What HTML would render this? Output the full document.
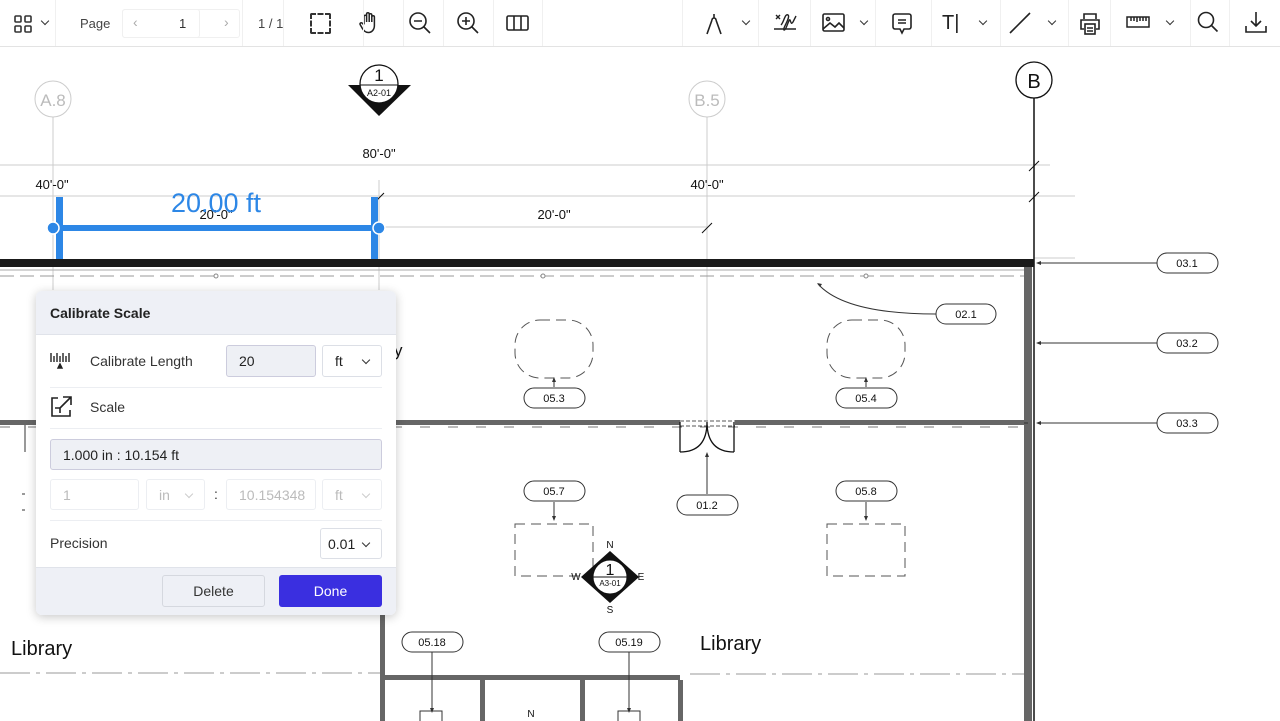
<!DOCTYPE html>
<html><head><meta charset="utf-8"><style>
*{box-sizing:border-box;margin:0;padding:0}
body{width:1280px;height:721px;overflow:hidden;background:#fff;font-family:"Liberation Sans",sans-serif;position:relative;color:#222}
.tb{position:absolute;left:0;top:0;width:1280px;height:47px;background:#fff;border-bottom:1px solid #e3e3e3;z-index:3}
.sep{position:absolute;top:0;width:1px;height:46px;background:#f0f0f0}
.ic{position:absolute;top:11px}
.chev{position:absolute;top:18px;width:6px;height:6px;border-right:1.5px solid #333;border-bottom:1.5px solid #333;transform:rotate(45deg)}
.panel{position:absolute;left:36px;top:291px;width:360px;height:324px;background:#fff;border-radius:6px;box-shadow:0 2px 10px rgba(0,0,0,.22);z-index:4;overflow:hidden;font-size:14px}
.hd{height:44px;background:#eef0f6;border-bottom:1px solid #e0e3ea;padding:14px 14px;font-weight:bold;font-size:14px;color:#222}
.box{position:absolute;border:1px solid #dcdfe6;border-radius:3px;background:#fff;font-size:14px;padding:0 12px;display:flex;align-items:center}
.sel::after{content:"";position:absolute;right:12px;top:11px;width:5px;height:5px;border-right:1.5px solid #333;border-bottom:1.5px solid #333;transform:rotate(45deg)}
.dis{color:#bbb;border-color:#eceef2}
.dis.sel::after{border-color:#ccc}
.hr{position:absolute;left:14px;right:14px;height:1px;background:#eceef2}
.btn{position:absolute;top:284px;height:32px;border-radius:3px;display:flex;align-items:center;justify-content:center;font-size:14px}
</style></head><body>
<div class="tb">
 <svg class="ic" style="left:14px;top:15px" width="18" height="18" viewBox="0 0 18 18" fill="none" stroke="#333" stroke-width="1.6"><rect x="1" y="1" width="6" height="6" rx="1"/><rect x="11" y="1" width="6" height="6" rx="1"/><rect x="1" y="11" width="6" height="6" rx="1"/><rect x="11" y="11" width="6" height="6" rx="1"/></svg>
 <div class="chev" style="left:42px"></div>
 <div class="sep" style="left:55px"></div>
 <div style="position:absolute;left:80px;top:16px;font-size:13px;color:#444">Page</div>
 <div style="position:absolute;left:122px;top:9px;width:78px;height:29px;border:1px solid #f0f0f0;border-radius:3px"></div>
 <div style="position:absolute;left:122px;top:9px;width:118px;height:29px;border:1px solid #f0f0f0;border-radius:3px"></div>
 <div style="position:absolute;left:133px;top:14px;font-size:14px;color:#aaa">‹</div>
 <div style="position:absolute;left:179px;top:16px;font-size:13px;color:#333">1</div>
 <div style="position:absolute;left:224px;top:14px;font-size:14px;color:#aaa">›</div>
 <div style="position:absolute;left:258px;top:16px;font-size:13px;color:#444">1 / 1</div>
 <div class="sep" style="left:242px"></div><div class="sep" style="left:283px"></div>
 <div style="position:absolute;left:310px;top:13px;width:21px;height:21px;border:2px dashed #333;border-radius:2px"></div>
 <div class="sep" style="left:322px;display:none"></div>
 <svg class="ic" style="left:358px" width="22" height="24" viewBox="0 0 22 24" fill="none" stroke="#222" stroke-width="1.5" stroke-linejoin="round"><path d="M6 13V5.5a1.3 1.3 0 0 1 2.6 0V11M8.6 10V3a1.3 1.3 0 0 1 2.6 0v8M11.2 10V4a1.3 1.3 0 0 1 2.6 0v7M13.8 10.5V6a1.3 1.3 0 0 1 2.6 0v8.5c0 4-2.5 7-6 7-3 0-4.5-1.5-6-4l-2.3-4a1.3 1.3 0 0 1 2.2-1.3L6 14"/></svg>
 <svg class="ic" style="left:408px" width="24" height="24" viewBox="0 0 24 24" fill="none" stroke="#222" stroke-width="1.6"><circle cx="10" cy="10" r="8"/><path d="M16 16l6 6M6 10h8"/></svg>
 <svg class="ic" style="left:456px" width="24" height="24" viewBox="0 0 24 24" fill="none" stroke="#222" stroke-width="1.6"><circle cx="10" cy="10" r="8"/><path d="M16 16l6 6M6 10h8M10 6v8"/></svg>
 <svg class="ic" style="left:506px;top:15px" width="23" height="16" viewBox="0 0 23 16" fill="none" stroke="#222" stroke-width="1.6"><rect x="1" y="1" width="21" height="14" rx="1.5"/><path d="M8 1v14M15 1v14"/></svg>
 <div class="sep" style="left:363px"></div><div class="sep" style="left:403px"></div><div class="sep" style="left:443px"></div><div class="sep" style="left:493px"></div><div class="sep" style="left:542px"></div>
 <div class="sep" style="left:682px"></div><div class="sep" style="left:758px"></div><div class="sep" style="left:810px"></div><div class="sep" style="left:875px"></div><div class="sep" style="left:931px"></div><div class="sep" style="left:1000px"></div><div class="sep" style="left:1068px"></div><div class="sep" style="left:1110px"></div><div class="sep" style="left:1190px"></div><div class="sep" style="left:1229px"></div>
 <svg class="ic" style="left:704px" width="20" height="24" viewBox="0 0 20 24" fill="none" stroke="#222" stroke-width="1.6"><path d="M3 23L8 9M17 23L12 9M8 9a2 2 0 0 1 4 0M10 7V3"/></svg>
 <div class="chev" style="left:743px"></div>
 <svg class="ic" style="left:772px" width="26" height="24" viewBox="0 0 26 24" fill="none" stroke="#222" stroke-width="1.4"><path d="M2 18h22M4 4l4 4M8 4l-4 4M9 14c3-3 4-12 7-10s-6 14-4 15 5-12 6-10 1 5 3 2l3-6"/></svg>
 <svg class="ic" style="left:822px;top:13px" width="23" height="19" viewBox="0 0 23 19" fill="none" stroke="#222" stroke-width="1.6"><rect x="1" y="1" width="21" height="17" rx="1.5"/><circle cx="6" cy="6" r="1.5"/><path d="M1 16l7-6 5 4 4-4 5 5"/></svg>
 <div class="chev" style="left:861px"></div>
 <svg class="ic" style="left:892px;top:13px" width="20" height="22" viewBox="0 0 20 22" fill="none" stroke="#222" stroke-width="1.6"><path d="M3 1h14a2 2 0 0 1 2 2v11a2 2 0 0 1-2 2h-5l-2 4-2-4H3a2 2 0 0 1-2-2V3a2 2 0 0 1 2-2zM6 7h8M6 10h8"/></svg>
 <div style="position:absolute;left:942px;top:12px;font-size:20px;color:#222">T|</div>
 <div class="chev" style="left:980px"></div>
 <svg class="ic" style="left:1009px;top:12px" width="22" height="22"><path d="M1 21L21 1" stroke="#222" stroke-width="1.6"/></svg>
 <div class="chev" style="left:1049px"></div>
 <svg class="ic" style="left:1078px;top:12px" width="24" height="24" viewBox="0 0 24 24" fill="none" stroke="#222" stroke-width="1.6"><path d="M6 7V2h12v5M6 17H3V8h18v9h-3"/><rect x="7" y="12" width="10" height="10"/><path d="M9 16h6M9 19h6"/></svg>
 <svg class="ic" style="left:1126px;top:16px" width="24" height="12" viewBox="0 0 24 12" fill="none" stroke="#222" stroke-width="1.5"><rect x="1" y="1" width="22" height="10"/><path d="M5 1v4M8 1v4M11 1v5M14 1v4M17 1v4M20 1v4"/></svg>
 <div class="chev" style="left:1167px"></div>
 <svg class="ic" style="left:1197px" width="22" height="22" viewBox="0 0 22 22" fill="none" stroke="#222" stroke-width="1.6"><circle cx="9" cy="9" r="7.5"/><path d="M14.5 14.5l6 6"/></svg>
 <svg class="ic" style="left:1245px" width="22" height="22" viewBox="0 0 22 22" fill="none" stroke="#222" stroke-width="1.6"><path d="M11 1v14M6 10l5 5 5-5M1 15v6h20v-6"/></svg>
</div>

<svg style="position:absolute;left:0;top:0" width="1280" height="721" font-family="Liberation Sans, sans-serif">
 <g stroke="#ccc" stroke-width="1">
  <line x1="0" y1="165" x2="1050" y2="165"/><line x1="0" y1="196" x2="1075" y2="196"/><line x1="380" y1="227" x2="707" y2="227"/>
  <line x1="53" y1="117" x2="53" y2="290"/><line x1="379" y1="180" x2="379" y2="290"/><line x1="707" y1="117" x2="707" y2="420"/>
  <line x1="1034" y1="258" x2="1075" y2="258"/>
 </g>
 <circle cx="53" cy="99" r="18" fill="#fff" stroke="#ccc"/><text x="53" y="106" font-size="17" fill="#bbb" text-anchor="middle">A.8</text>
 <circle cx="707" cy="99" r="18" fill="#fff" stroke="#ccc"/><text x="707" y="106" font-size="17" fill="#bbb" text-anchor="middle">B.5</text>
 <line x1="1034" y1="98" x2="1034" y2="721" stroke="#111" stroke-width="1.5"/>
 <circle cx="1034" cy="80" r="18" fill="#fff" stroke="#111" stroke-width="1.3"/><text x="1034" y="88" font-size="20" fill="#111" text-anchor="middle">B</text>
 <path d="M1029 171l10-10M1029 202l10-10M702 233l10-10M376 201l8-8" stroke="#111"/>
 <!-- section marker -->
 <polygon points="348,85 411,85 379,116" fill="#111"/>
 <circle cx="379" cy="84" r="19" fill="#fff" stroke="#111" stroke-width="1.3"/>
 <line x1="360" y1="85" x2="398" y2="85" stroke="#111"/>
 <text x="379" y="81" font-size="17" text-anchor="middle" fill="#111">1</text><text x="379" y="96" font-size="9" text-anchor="middle" fill="#111">A2-01</text>
 <g font-size="13" fill="#111" text-anchor="middle">
  <text x="379" y="158">80'-0"</text><text x="52" y="189">40'-0"</text><text x="707" y="189">40'-0"</text><text x="216" y="219">20'-0"</text><text x="554" y="219">20'-0"</text>
 </g>
 <!-- walls -->
 <rect x="0" y="259" width="1034" height="8" fill="#1a1a1a"/>
 <line x1="0" y1="270" x2="1024" y2="270" stroke="#aaa"/>
 <line x1="0" y1="276" x2="1024" y2="276" stroke="#999" stroke-dasharray="14 6"/>
 <circle cx="216" cy="276" r="2" fill="#fff" stroke="#888"/><circle cx="543" cy="276" r="2" fill="#fff" stroke="#888"/><circle cx="866" cy="276" r="2" fill="#fff" stroke="#888"/>
 <rect x="1024" y="267" width="8" height="454" fill="#666"/>
 <rect x="0" y="420" width="680" height="5" fill="#666"/><rect x="735" y="420" width="290" height="5" fill="#666"/>
 <line x1="0" y1="427" x2="1024" y2="427" stroke="#777" stroke-dasharray="10 18"/>
 <path d="M680 421h55M680 426h55" stroke="#555" stroke-dasharray="4 2"/>
 <path d="M680 422v30M734 422v30M680 452c18 0 27-10 27-30c0 20 9 30 27 30" fill="none" stroke="#111" stroke-width="1.3"/>
 <rect x="380" y="420" width="5" height="301" fill="#666"/>
 <rect x="380" y="675" width="300" height="5" fill="#666"/>
 <rect x="480" y="680" width="5" height="41" fill="#666"/><rect x="580" y="680" width="5" height="41" fill="#666"/><rect x="678" y="680" width="5" height="41" fill="#666"/>
 <line x1="0" y1="673" x2="380" y2="673" stroke="#999" stroke-dasharray="30 6 4 6"/>
 <line x1="690" y1="674" x2="1024" y2="674" stroke="#999" stroke-dasharray="30 6 4 6"/>
 <g stroke="#555" fill="none" stroke-dasharray="10 6">
  <rect x="515" y="524" width="78" height="52"/><rect x="827" y="524" width="78" height="52"/>
  <rect x="515" y="320" width="78" height="58" rx="25"/><rect x="827" y="320" width="78" height="58" rx="25"/>
 </g>
 <rect x="420" y="711" width="22" height="12" fill="#fff" stroke="#333"/><rect x="618" y="711" width="22" height="12" fill="#fff" stroke="#333"/>
 <text x="531" y="717" font-size="10" text-anchor="middle" fill="#111">N</text>
 <!-- compass -->
 <polygon points="610,551 639,577 610,603 581,577" fill="#111"/>
 <circle cx="610" cy="577" r="17" fill="#fff" stroke="#111"/>
 <line x1="583" y1="577" x2="637" y2="577" stroke="#111"/>
 <text x="610" y="575" font-size="16" text-anchor="middle" fill="#111">1</text><text x="610" y="586" font-size="8" text-anchor="middle" fill="#111">A3-01</text>
 <g font-size="10" fill="#111" text-anchor="middle"><text x="610" y="548">N</text><text x="610" y="613">S</text><text x="576" y="580">W</text><text x="641" y="580">E</text></g>
 <!-- leaders -->
 <g stroke="#333" fill="none">
  <path d="M554 387v-9M866 387v-9M554 502v18M866 502v18M707 494v-40M432 652v60M629 652v60M1158 263h-120M1158 343h-120M1158 423h-120M1024 423h4"/>
  <path d="M936 314c-60 0-100-10-118-30"/>
 </g>
 <g fill="#333"><path d="M554 377l-2 5h4zM866 377l-2 5h4zM554 521l-2-5h4zM866 521l-2-5h4zM707 452l-2 5h4zM432 713l-2-5h4zM629 713l-2-5h4zM1036 263l5-2v4zM1036 343l5-2v4zM1036 423l5-2v4zM817 283l5 1-2 3z"/></g>
 <g fill="#fff" stroke="#333"><rect x="524" y="388" width="61" height="20" rx="10"/><rect x="836" y="388" width="61" height="20" rx="10"/><rect x="524" y="481" width="61" height="20" rx="10"/><rect x="836" y="481" width="61" height="20" rx="10"/><rect x="677" y="495" width="61" height="20" rx="10"/><rect x="402" y="632" width="61" height="20" rx="10"/><rect x="599" y="632" width="61" height="20" rx="10"/><rect x="936" y="304" width="60" height="20" rx="10"/><rect x="1157" y="253" width="61" height="20" rx="10"/><rect x="1157" y="333" width="61" height="20" rx="10"/><rect x="1157" y="413" width="61" height="20" rx="10"/></g>
 <g font-size="11" fill="#111" text-anchor="middle"><text x="554" y="402">05.3</text><text x="866" y="402">05.4</text><text x="554" y="495">05.7</text><text x="866" y="495">05.8</text><text x="707" y="509">01.2</text><text x="432" y="646">05.18</text><text x="629" y="646">05.19</text><text x="966" y="318">02.1</text><text x="1187" y="267">03.1</text><text x="1187" y="347">03.2</text><text x="1187" y="427">03.3</text></g>
 <text x="11" y="655" font-size="20" fill="#111">Library</text><text x="700" y="650" font-size="20" fill="#111">Library</text>
 <text x="394" y="356" font-size="17" fill="#111">y</text>
 <path d="M25 425v27M22 494h3M22 510h3" stroke="#333" fill="none"/>
 <!-- measurement -->
 <g fill="#2d87e6"><rect x="56" y="197" width="7" height="62"/><rect x="371" y="197" width="7" height="62"/><rect x="56" y="225" width="322" height="6"/><circle cx="53" cy="228" r="6" stroke="#fff" stroke-width="1.5"/><circle cx="379" cy="228" r="6" stroke="#fff" stroke-width="1.5"/></g>
 <text x="216" y="212" font-size="27" fill="#2d87e6" text-anchor="middle">20.00 ft</text>
</svg>

<div class="panel">
 <div class="hd">Calibrate Scale</div>
 <svg style="position:absolute;left:13px;top:60px" width="24" height="18" viewBox="0 0 24 18" fill="none" stroke="#222" stroke-width="1.4"><path d="M2 2v9M5 5v6M8 2v9M11 5v6M14 2v9M17 5v6M20 2v9"/><path d="M9 17l2-4 2 4z" fill="#222"/></svg>
 <div style="position:absolute;left:54px;top:62px;color:#333">Calibrate Length</div>
 <div class="box" style="left:190px;top:54px;width:90px;height:32px;background:#eef0f5;border-color:#ccd">20</div>
 <div class="box sel" style="left:286px;top:54px;width:60px;height:32px">ft</div>
 <div class="hr" style="top:96px"></div>
 <svg style="position:absolute;left:13px;top:104px" width="24" height="24" viewBox="0 0 24 24" fill="none" stroke="#222" stroke-width="1.6"><path d="M9 3H3v18h18v-6M14 2h8v8M22 2L11 13M11 13H6M11 13v5"/></svg>
 <div style="position:absolute;left:54px;top:108px;color:#333">Scale</div>
 <div class="hr" style="top:137px"></div>
 <div class="box" style="left:14px;top:148px;width:332px;height:31px;background:#eef0f5;border-color:#ccd;color:#222">1.000 in : 10.154 ft</div>
 <div class="box dis" style="left:14px;top:188px;width:89px;height:31px">1</div>
 <div class="box dis sel" style="left:110px;top:188px;width:59px;height:31px">in</div>
 <div style="position:absolute;left:178px;top:195px;color:#333">:</div>
 <div class="box dis" style="left:190px;top:188px;width:90px;height:31px">10.154348</div>
 <div class="box dis sel" style="left:286px;top:188px;width:60px;height:31px">ft</div>
 <div class="hr" style="top:229px"></div>
 <div style="position:absolute;left:14px;top:244px;color:#333">Precision</div>
 <div class="box sel" style="left:284px;top:237px;width:62px;height:31px;padding-left:7px">0.01</div>
 <div style="position:absolute;left:0;top:276px;width:360px;height:48px;background:#eef0f6;border-top:1px solid #e0e3ea"></div>
 <div class="btn" style="left:126px;width:103px;border:1px solid #d5d8df;background:#eef0f6;color:#333">Delete</div>
 <div class="btn" style="left:243px;width:103px;background:#3a2fe0;color:#fff">Done</div>
</div>
</body></html>
